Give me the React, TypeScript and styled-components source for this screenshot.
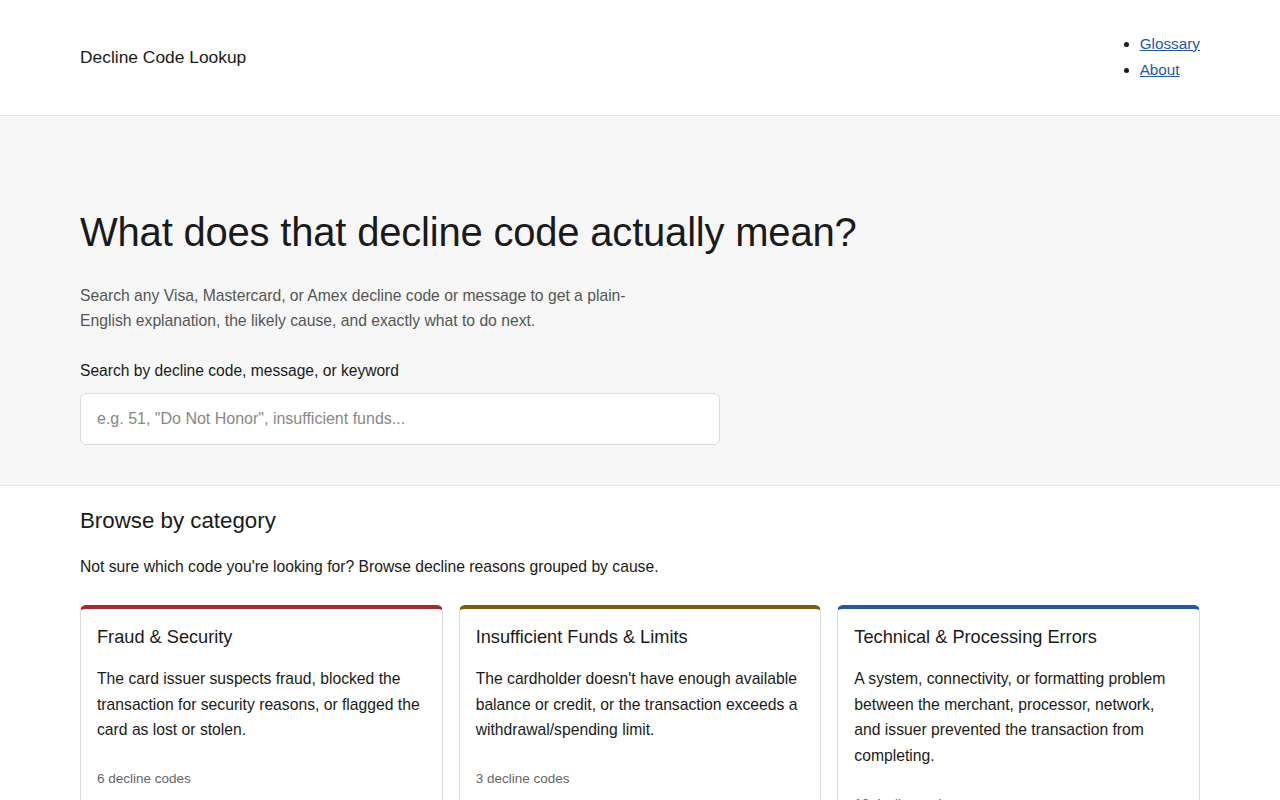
import styled, { createGlobalStyle } from "styled-components";

const GlobalStyle = createGlobalStyle`
  * { box-sizing: border-box; }
  body {
    margin: 0;
    font-family: "Liberation Sans", Arial, sans-serif;
    color: #1a1a1a;
    background: #fff;
  }
`;

const categories = [
  {
    title: "Fraud & Security",
    desc: "The card issuer suspects fraud, blocked the transaction for security reasons, or flagged the card as lost or stolen.",
    count: 6,
    color: "#a52a2a",
  },
  {
    title: "Insufficient Funds & Limits",
    desc: "The cardholder doesn't have enough available balance or credit, or the transaction exceeds a withdrawal/spending limit.",
    count: 3,
    color: "#7d5a12",
  },
  {
    title: "Technical & Processing Errors",
    desc: "A system, connectivity, or formatting problem between the merchant, processor, network, and issuer prevented the transaction from completing.",
    count: 12,
    color: "#1f5aa6",
  },
];

const Header = () => (
  <SHeader>
    <Brand>Decline Code Lookup</Brand>
    <Nav>
      <li>
        <a href="#">Glossary</a>
      </li>
      <li>
        <a href="#">About</a>
      </li>
    </Nav>
  </SHeader>
);

const App = () => {
  return (
    <>
      <GlobalStyle />
      <Header />
      <Hero>
        <Container>
          <HeroTitle>What does that decline code actually mean?</HeroTitle>
          <Lead>
            Search any Visa, Mastercard, or Amex decline code or message to get
            a plain-English explanation, the likely cause, and exactly what to
            do next.
          </Lead>
          <Label htmlFor="q">Search by decline code, message, or keyword</Label>
          <SearchInput
            id="q"
            type="text"
            placeholder={'e.g. 51, "Do Not Honor", insufficient funds...'}
          />
        </Container>
      </Hero>
      <Container as="section">
        <SectionTitle>Browse by category</SectionTitle>
        <SectionText>
          Not sure which code you're looking for? Browse decline reasons grouped
          by cause.
        </SectionText>
        <CardGrid>
          {categories.map((c) => (
            <Card key={c.title} $accent={c.color}>
              <CardTitle>{c.title}</CardTitle>
              <CardDesc>{c.desc}</CardDesc>
              <CardCount>{c.count} decline codes</CardCount>
            </Card>
          ))}
        </CardGrid>
      </Container>
    </>
  );
};

const SHeader = styled.header`
  height: 116px;
  padding: 0 80px;
  display: flex;
  align-items: center;
  justify-content: space-between;
  border-bottom: 1px solid #e2e2e2;
`;

const Brand = styled.div`
  font-size: 17.4px;
  color: #1a1a1a;
`;

const Nav = styled.ul`
  margin: -2px 0 0;
  padding-left: 20px;
  font-size: 15.3px;
  line-height: 26px;

  a {
    color: #1f5aa6;
  }
`;

const Hero = styled.div`
  background: #f7f7f7;
  border-bottom: 1px solid #e2e2e2;
  padding: 92px 0 40px;
`;

const Container = styled.div`
  padding: 0 80px;
`;

const HeroTitle = styled.h1`
  margin: 0;
  font-size: 40px;
  font-weight: 400;
  line-height: 48px;
  color: #1a1a1a;
  letter-spacing: -0.2px;
`;

const Lead = styled.p`
  margin: 27px 0 0;
  max-width: 580px;
  font-size: 15.7px;
  line-height: 25px;
  color: #555;
`;

const Label = styled.label`
  display: block;
  margin-top: 26px;
  font-size: 15.6px;
  line-height: 24px;
  color: #1a1a1a;
`;

const SearchInput = styled.input`
  display: block;
  margin-top: 10px;
  width: 640px;
  height: 52px;
  padding: 0 16px;
  border: 1px solid #dcdcdc;
  border-radius: 6px;
  background: #fff;
  font-family: "Liberation Sans", Arial, sans-serif;
  font-size: 16px;
  color: #1a1a1a;

  &::placeholder {
    color: #888;
  }
`;

const SectionTitle = styled.h2`
  margin: 21px 0 0;
  font-size: 22.3px;
  font-weight: 400;
  line-height: 28px;
`;

const SectionText = styled.p`
  margin: 20px 0 0;
  font-size: 15.7px;
  line-height: 24px;
`;

const CardGrid = styled.div`
  display: grid;
  grid-template-columns: repeat(3, 1fr);
  gap: 16px;
  margin-top: 26px;
`;

const Card = styled.div<{ $accent: string }>`
  border: 1px solid #dcdcdc;
  border-top: 4px solid ${(p) => p.$accent};
  border-radius: 6px;
  padding: 16px 16px 20px;
  background: #fff;
`;

const CardTitle = styled.h3`
  margin: 0;
  font-size: 18.2px;
  font-weight: 400;
  line-height: 24px;
`;

const CardDesc = styled.p`
  margin: 17px 0 0;
  font-size: 15.7px;
  line-height: 25.6px;
  color: #1a1a1a;
`;

const CardCount = styled.div`
  margin-top: 28px;
  font-size: 13.5px;
  color: #666;
`;

export default App;
